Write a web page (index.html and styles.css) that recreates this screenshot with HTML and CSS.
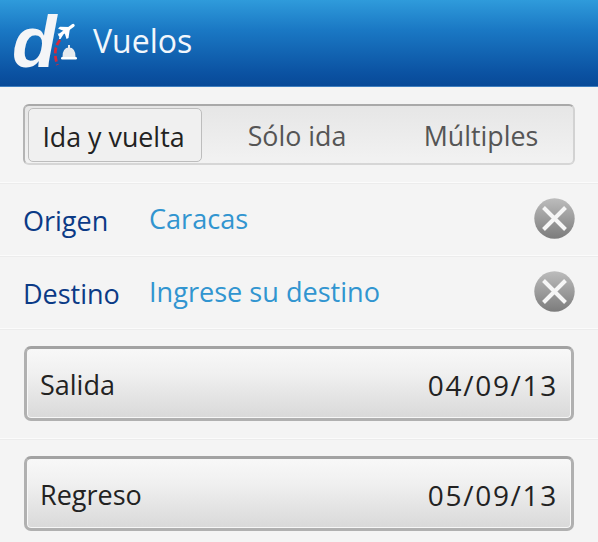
FILE: index.html
```
<!DOCTYPE html>
<html lang="es">
<head>
<meta charset="utf-8">
<title>Vuelos</title>
<link rel="stylesheet" href="styles.css">
</head>
<body>
<div class="app">
  <header class="header">
    <div class="logo">
      <span class="logo-d">d</span>
      <svg class="logo-mark" width="30" height="50" viewBox="0 0 30 50">
        <path d="M10 15 L23 5.500" fill="none" stroke="#fff" stroke-width="3.400" stroke-linecap="round"/>
        <path d="M8 8.500 L10 6.800 L20 7 L15 11.500 Z M20 8 L18.500 18 L16.500 19 L14 11 Z M7.500 13.500 L11 14 L13 15 L10.500 19 L9 19 L9.500 16 Z" fill="#fff"/>
        <path d="M10 20 Q2 30 7.500 45" fill="none" stroke="#d42a3c" stroke-width="2.800" stroke-dasharray="6 2.500"/>
        <path d="M12.500 37 Q12.500 27.500 19 27.500 Q25.500 27.500 25.500 37 Z" fill="#e6eaee"/>
        <rect x="18" y="25" width="2" height="3" fill="#e6eaee"/>
        <rect x="11" y="37" width="16" height="2.500" rx="1.200" fill="#fff"/>
      </svg>
    </div>
    <h1 class="title">Vuelos</h1>
  </header>

  <section class="band">
    <div class="segmented">
      <div class="segment segment-on">Ida y vuelta</div>
      <div class="segment seg-two">Sólo ida</div>
      <div class="segment seg-three">Múltiples</div>
    </div>
  </section>

  <div class="field">
    <span class="field-label">Origen</span>
    <span class="field-value">Caracas</span>
    <svg class="clear" width="41" height="41" viewBox="0 0 41 41">
      <defs><linearGradient id="cg" x1="0" y1="0" x2="0" y2="1"><stop offset="0" stop-color="#bcbcbc"/><stop offset="1" stop-color="#7c7c7c"/></linearGradient></defs>
      <circle cx="20.500" cy="20.500" r="20.200" fill="url(#cg)"/>
      <path d="M9.500 9.500 L31.500 31.500 M31.500 9.500 L9.500 31.500" stroke="#f6f6f6" stroke-width="4"/>
    </svg>
  </div>
  <div class="field">
    <span class="field-label">Destino</span>
    <span class="field-value">Ingrese su destino</span>
    <svg class="clear" width="41" height="41" viewBox="0 0 41 41">
      <circle cx="20.500" cy="20.500" r="20.200" fill="url(#cg)"/>
      <path d="M9.500 9.500 L31.500 31.500 M31.500 9.500 L9.500 31.500" stroke="#f6f6f6" stroke-width="4"/>
    </svg>
  </div>

  <section class="band">
    <div class="date-btn"><span>Salida</span><span class="date">04/09/13</span></div>
  </section>
  <section class="band band-last">
    <div class="date-btn"><span>Regreso</span><span class="date">05/09/13</span></div>
  </section>
</div>
</body>
</html>
```
FILE: styles.css
```
* { box-sizing: border-box; }
html, body { margin: 0; padding: 0; }
body { background: #f4f4f4; font-family: "Open Sans", "Noto Sans", sans-serif; overflow: hidden; }
.app { width: 598px; height: 542px; overflow: hidden; }

.header {
  height: 87px;
  display: flex;
  align-items: flex-start;
  background: linear-gradient(#2f9bdb 0%, #1a78c4 35%, #0b52a2 85%, #084a98 100%);
  border-bottom: 1px solid #3f7fc0;
}
.logo { width: 93px; height: 87px; position: relative; flex: none; }
.logo-d {
  position: absolute;
  left: 12px;
  top: 6px;
  font: italic bold 73px/72px "Liberation Sans", sans-serif;
  color: #f4f5f7;
}
.logo-mark { position: absolute; left: 50px; top: 20px; }
.title {
  margin: 18px 0 0;
  font-size: 32px;
  line-height: 46px;
  font-weight: 400;
  color: #f2f7fc;
}

.band {
  padding: 17px 23px 17px;
  border-bottom: 1px solid #fbfbfb;
  box-shadow: 0 1px 0 #ececec;
}
.band-last { border-bottom: 0; box-shadow: none; }

.segmented {
  height: 61px;
  display: flex;
  align-items: center;
  padding: 0 3px;
  border: 2px solid #c6c6c6;
  border-top-color: #a9a9a9;
  border-left-color: #b4b4b4;
  border-bottom-color: #d6d6d6;
  border-right-color: #d2d2d2;
  border-radius: 6px;
  background: linear-gradient(#e6e6e6, #f2f2f2);
}
.segment {
  font-size: 26.8px;
  line-height: 52px;
  padding-top: 2px;
  color: #555;
  text-align: center;
}
.segment-on {
  width: 174px;
  height: 54px;
  flex: none;
  padding-right: 3px;
  border: 1px solid #bdbdbd;
  border-radius: 5px;
  background: #f0f0f0;
  color: #222;
}
.seg-two { width: 190px; flex: none; }
.seg-three { flex: 1; }

.field {
  height: 73px;
  display: flex;
  align-items: center;
  padding: 0 23px 1px;
  border-bottom: 1px solid #fbfbfb;
  box-shadow: 0 1px 0 #ececec;
}
.field-label {
  width: 126px;
  flex: none;
  font-size: 27px;
  color: #0b3a86;
  padding-top: 4px;
}
.field-value {
  flex: 1;
  font-size: 27.1px;
  color: #3195d0;
  padding-bottom: 1px;
}
.clear { flex: none; }

.date-btn {
  height: 75px;
  margin: 0 1px;
  display: flex;
  align-items: center;
  justify-content: space-between;
  padding: 2px 13px 0 13px;
  border: 3px solid #b0b0b0;
  border-top-color: #a2a2a2;
  border-radius: 7px;
  background: linear-gradient(#f8f8f8 0%, #f0f0f0 35%, #d9d9d9 100%);
  box-shadow: inset 0 0 0 1px #f7f7f7;
  font-size: 27px;
  color: #222;
}
.date { font-size: 28px; letter-spacing: 1.7px; }
```
